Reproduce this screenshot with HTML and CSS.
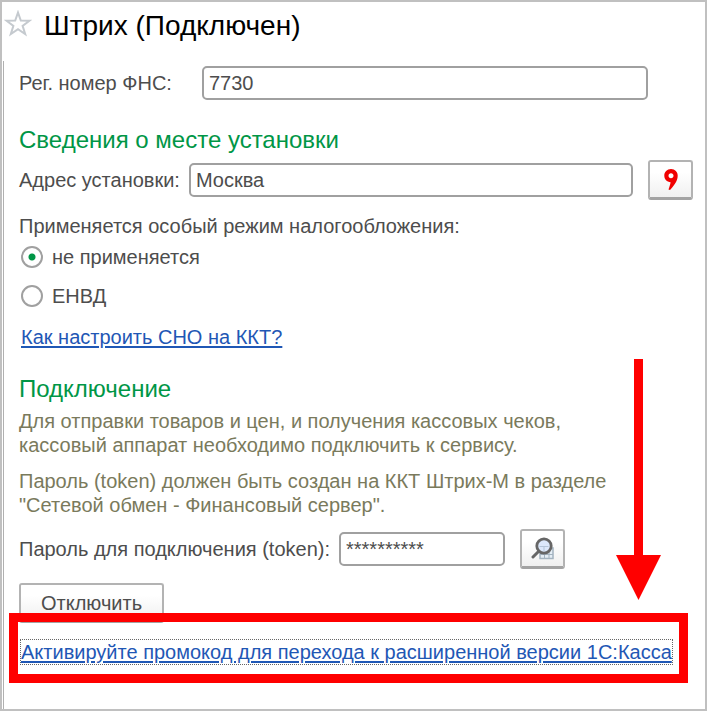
FILE: index.html
```html
<!DOCTYPE html>
<html lang="ru">
<head>
    <meta charset="UTF-8">
    <meta name="viewport" content="width=device-width, initial-scale=1.0">
    <title>Штрих (Подключен)</title>
    <link rel="stylesheet" href="styles.css">
</head>
<body>
    <div class="window">
        <header class="header">
            <svg class="star" viewBox="0 0 28 28" aria-hidden="true">
                <path d="M14 2.5 L16.8 10.5 L25.5 10.7 L18.6 15.9 L21.2 24 L14 19.2 L6.8 24 L9.4 15.9 L2.5 10.7 L11.2 10.5 Z"/>
            </svg>
            <h1>Штрих (Подключен)</h1>
        </header>

        <main class="panel">
            <div class="row row-reg">
                <label for="reg">Рег. номер ФНС:</label>
                <input class="field" type="text" id="reg" value="7730">
            </div>

            <h2>Сведения о месте установки</h2>
            <div class="row row-address">
                <label for="address">Адрес установки:</label>
                <input class="field" type="text" id="address" value="Москва">
                <button class="btn btn-icon" type="button" aria-label="Показать на карте">
                    <svg width="24" height="24" viewBox="0 0 24 24">
                        <path fill="#f00000" fill-rule="evenodd" d="M12 1 C8 1 5.300 4 5.300 7.700 C5.300 11.200 7.900 13.900 11.600 14.200 C11.300 16.500 10.300 19 9.500 21.500 L11 22 C14 18.500 18.700 13.500 18.700 7.700 C18.700 4 16 1 12 1 Z M12 5.300 C13.500 5.300 14.500 6.300 14.500 7.800 C14.500 9.300 13.500 10.300 12 10.300 C10.500 10.300 9.500 9.300 9.500 7.800 C9.500 6.300 10.500 5.300 12 5.300 Z"/>
                    </svg>
                </button>
            </div>

            <fieldset class="tax">
                <legend>Применяется особый режим налогообложения:</legend>
                <label class="option"><input type="radio" name="tax" checked> не применяется</label>
                <label class="option"><input type="radio" name="tax"> ЕНВД</label>
            </fieldset>
            <a class="link" href="#">Как настроить СНО на ККТ?</a>

            <h2>Подключение</h2>
            <p>Для отправки товаров и цен, и получения кассовых чеков,<br>кассовый аппарат необходимо подключить к сервису.</p>
            <p>Пароль (token) должен быть создан на ККТ Штрих-М в разделе<br>"Сетевой обмен - Финансовый сервер".</p>

            <div class="row row-token">
                <label for="token">Пароль для подключения (token):</label>
                <input class="field" type="text" id="token" value="**********">
                <button class="btn btn-icon" type="button" aria-label="Показать пароль">
                    <svg width="24" height="24" viewBox="0 0 24 24">
                        <path fill="#e4edf5" stroke="#a3b3c0" stroke-width="1.500" d="M9 11 H22 V21.500 H9 Z"/>
                        <path fill="none" stroke="#a3b3c0" stroke-width="1" d="M9 17.500 H22 M13.500 15 V22 M18 15 V22"/>
                        <circle cx="13" cy="9" r="7.200" fill="#dce8fb" stroke="#666" stroke-width="2.800"/>
                        <path fill="none" stroke="#b4c4d8" stroke-width="1" d="M8.500 9.500 H17.500 M13 9.500 V14.500"/>
                        <path fill="none" stroke="#666" stroke-width="3" stroke-linecap="round" d="M7.500 14.500 L2 20"/>
                    </svg>
                </button>
            </div>

            <button class="btn btn-off" type="button">Отключить</button>

            <div class="promo">
                <a class="link focused" href="#">Активируйте промокод для перехода к расширенной версии 1С:Касса</a>
                <svg class="arrow" width="45" height="241" viewBox="0 0 45 241" aria-hidden="true">
                    <path fill="#f00" d="M18 0 H27 V196 H45 L22.500 241 L0 196 H18 Z"/>
                </svg>
            </div>
        </main>
    </div>
</body>
</html>
```

FILE: styles.css
```css
* {
    box-sizing: border-box;
}

body {
    margin: 0;
    background: #fff;
    color: #4d4d4d;
    font-family: "Liberation Sans", Arial, sans-serif;
    font-size: 20px;
    line-height: 24px;
}

.window {
    display: flex;
    flex-direction: column;
    min-height: 100vh;
    border: 2px solid #c0c0c0;
}

.header {
    display: flex;
    align-items: flex-start;
    gap: 12px;
    padding: 8px 2px 19px;
}

.star {
    width: 28px;
    height: 28px;
    fill: #fff;
    stroke: #c5cacf;
    stroke-width: 2;
}

h1 {
    margin: 0;
    color: #000;
    font-size: 28px;
    font-weight: normal;
    line-height: 32px;
}

h2 {
    margin: 26px 0 6px;
    color: #009646;
    font-size: 24px;
    font-weight: normal;
    line-height: 28px;
}

p {
    margin: 0 0 12px;
    color: #7a7a5c;
}

.panel {
    flex: 1;
    margin-left: 1px;
    padding: 5px 12px 26px 15px;
    border-left: 1px solid #b0b0b0;
}

.row {
    display: flex;
    align-items: center;
}

.row-reg {
    gap: 30px;
    padding-right: 45px;
}

.row-address,
.row-token {
    gap: 9px;
}

.field {
    flex: 1;
    min-width: 0;
    height: 34px;
    padding: 0 5px;
    border: 2px solid #a0a0a0;
    border-radius: 5px;
    background: #fff;
    color: #4d4d4d;
    font: inherit;
}

.row-token .field {
    flex: 0 1 166px;
}

.btn {
    height: 40px;
    padding: 0 20px;
    border: 2px solid #b3b3b3;
    border-bottom: 3px solid #a3a3a3;
    border-radius: 3px;
    background: linear-gradient(#fff 30%, #f0f0f0);
    color: #4d4d4d;
    font: inherit;
}

.btn-icon {
    display: flex;
    align-items: center;
    justify-content: center;
    width: 45px;
    margin-left: 6px;
    padding: 0;
}

.btn-off {
    display: block;
    margin-top: 14px;
}

.tax {
    margin: 14px 0 17px;
    padding: 0;
    border: 0;
}

.tax legend {
    padding: 0;
}

.option {
    display: flex;
    align-items: center;
    gap: 9px;
    margin-top: 15px;
}

legend + .option {
    margin-top: 7px;
}

.option input {
    appearance: none;
    width: 22px;
    height: 22px;
    margin: 0 0 0 2px;
    border: 2px solid #a0a0a0;
    border-radius: 50%;
}

.option input:checked {
    background: radial-gradient(circle, #009646 3px, transparent 4px);
}

.link {
    display: block;
    width: fit-content;
    margin-left: 2px;
    color: #1f57b5;
    text-decoration-thickness: 2px;
    text-underline-offset: 2px;
}

.focused {
    outline: 1px dotted #666;
}

.promo {
    position: relative;
    margin-top: 17px;
}

/* red frame round the promo link */
.promo::before {
    content: "";
    position: absolute;
    inset: -27px 5px -19px -10px;
    border: 9px solid #f00;
    pointer-events: none;
}

.arrow {
    position: absolute;
    right: 32px;
    bottom: 64px;
}
```
